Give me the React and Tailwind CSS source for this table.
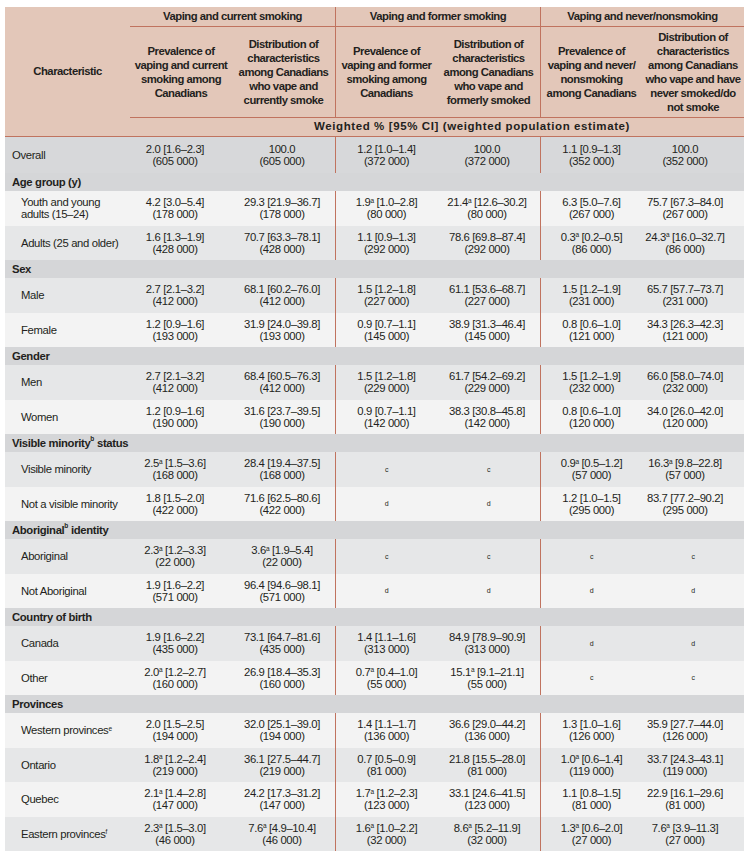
import React from 'react';

const L = 'bg-[#f3f3f3]';
const M = 'bg-[#e6e7e8]';

const rows = [
    { type: 'overall', label: 'Overall', cells: ['2.0 [1.6–2.3]|605 000', '100.0|605 000', '1.2 [1.0–1.4]|372 000', '100.0|372 000', '1.1 [0.9–1.3]|352 000', '100.0|352 000'] },
    { type: 'section', label: 'Age group (y)' },
    { label: ['Youth and young', 'adults (15–24)'], bg: L, cells: ['4.2 [3.0–5.4]|178 000', '29.3 [21.9–36.7]|178 000', '1.9^ [1.0–2.8]|80 000', '21.4^ [12.6–30.2]|80 000', '6.3 [5.0–7.6]|267 000', '75.7 [67.3–84.0]|267 000'] },
    { label: ['Adults (25 and older)'], bg: M, cells: ['1.6 [1.3–1.9]|428 000', '70.7 [63.3–78.1]|428 000', '1.1 [0.9–1.3]|292 000', '78.6 [69.8–87.4]|292 000', '0.3^ [0.2–0.5]|86 000', '24.3^ [16.0–32.7]|86 000'] },
    { type: 'section', label: 'Sex' },
    { label: ['Male'], bg: M, cells: ['2.7 [2.1–3.2]|412 000', '68.1 [60.2–76.0]|412 000', '1.5 [1.2–1.8]|227 000', '61.1 [53.6–68.7]|227 000', '1.5 [1.2–1.9]|231 000', '65.7 [57.7–73.7]|231 000'] },
    { label: ['Female'], bg: L, cells: ['1.2 [0.9–1.6]|193 000', '31.9 [24.0–39.8]|193 000', '0.9 [0.7–1.1]|145 000', '38.9 [31.3–46.4]|145 000', '0.8 [0.6–1.0]|121 000', '34.3 [26.3–42.3]|121 000'] },
    { type: 'section', label: 'Gender' },
    { label: ['Men'], bg: M, cells: ['2.7 [2.1–3.2]|412 000', '68.4 [60.5–76.3]|412 000', '1.5 [1.2–1.8]|229 000', '61.7 [54.2–69.2]|229 000', '1.5 [1.2–1.9]|232 000', '66.0 [58.0–74.0]|232 000'] },
    { label: ['Women'], bg: L, cells: ['1.2 [0.9–1.6]|190 000', '31.6 [23.7–39.5]|190 000', '0.9 [0.7–1.1]|142 000', '38.3 [30.8–45.8]|142 000', '0.8 [0.6–1.0]|120 000', '34.0 [26.0–42.0]|120 000'] },
    { type: 'section', label: 'Visible minority', sup: 'b', rest: 'status' },
    { label: ['Visible minority'], bg: M, cells: ['2.5^ [1.5–3.6]|168 000', '28.4 [19.4–37.5]|168 000', 'c', 'c', '0.9^ [0.5–1.2]|57 000', '16.3^ [9.8–22.8]|57 000'] },
    { label: ['Not a visible minority'], bg: L, cells: ['1.8 [1.5–2.0]|422 000', '71.6 [62.5–80.6]|422 000', 'd', 'd', '1.2 [1.0–1.5]|295 000', '83.7 [77.2–90.2]|295 000'] },
    { type: 'section', label: 'Aboriginal', sup: 'b', rest: 'identity' },
    { label: ['Aboriginal'], bg: M, cells: ['2.3^ [1.2–3.3]|22 000', '3.6^ [1.9–5.4]|22 000', 'c', 'c', 'c', 'c'] },
    { label: ['Not Aboriginal'], bg: L, cells: ['1.9 [1.6–2.2]|571 000', '96.4 [94.6–98.1]|571 000', 'd', 'd', 'd', 'd'] },
    { type: 'section', label: 'Country of birth' },
    { label: ['Canada'], bg: M, cells: ['1.9 [1.6–2.2]|435 000', '73.1 [64.7–81.6]|435 000', '1.4 [1.1–1.6]|313 000', '84.9 [78.9–90.9]|313 000', 'd', 'd'] },
    { label: ['Other'], bg: L, cells: ['2.0^ [1.2–2.7]|160 000', '26.9 [18.4–35.3]|160 000', '0.7^ [0.4–1.0]|55 000', '15.1^ [9.1–21.1]|55 000', 'c', 'c'] },
    { type: 'section', label: 'Provinces' },
    { label: ['Western provinces'], sup: 'e', bg: L, cells: ['2.0 [1.5–2.5]|194 000', '32.0 [25.1–39.0]|194 000', '1.4 [1.1–1.7]|136 000', '36.6 [29.0–44.2]|136 000', '1.3 [1.0–1.6]|126 000', '35.9 [27.7–44.0]|126 000'] },
    { label: ['Ontario'], bg: M, cells: ['1.8^ [1.2–2.4]|219 000', '36.1 [27.5–44.7]|219 000', '0.7 [0.5–0.9]|81 000', '21.8 [15.5–28.0]|81 000', '1.0^ [0.6–1.4]|119 000', '33.7 [24.3–43.1]|119 000'] },
    { label: ['Quebec'], bg: L, cells: ['2.1^ [1.4–2.8]|147 000', '24.2 [17.3–31.2]|147 000', '1.7^ [1.2–2.3]|123 000', '33.1 [24.6–41.5]|123 000', '1.1 [0.8–1.5]|81 000', '22.9 [16.1–29.6]|81 000'] },
    { label: ['Eastern provinces'], sup: 'f', bg: M, cells: ['2.3^ [1.5–3.0]|46 000', '7.6^ [4.9–10.4]|46 000', '1.6^ [1.0–2.2]|32 000', '8.6^ [5.2–11.9]|32 000', '1.3^ [0.6–2.0]|27 000', '7.6^ [3.9–11.3]|27 000'] },
];

// widths + group dividers for the six value columns
const colCls = [
    'w-[102px]',
    'w-[103px]',
    'w-[102px] border-l border-[#c0735f]',
    'w-[103px]',
    'w-[102px] border-l border-[#c0735f]',
    'w-[102px]',
];
const colPad = ['pr-[12px]', 'pr-[3px]', '', 'pr-[3px]', '', 'pr-[16px]'];

const subHeads = [
    ['Prevalence of', 'vaping and current', 'smoking among', 'Canadians'],
    ['Distribution of', 'characteristics', 'among Canadians', 'who vape and', 'currently smoke'],
    ['Prevalence of', 'vaping and former', 'smoking among', 'Canadians'],
    ['Distribution of', 'characteristics', 'among Canadians', 'who vape and', 'formerly smoked'],
    ['Prevalence of', 'vaping and never/', 'nonsmoking', 'among Canadians'],
    ['Distribution of', 'characteristics', 'among Canadians', 'who vape and have', 'never smoked/do', 'not smoke'],
];

function Sup({ children }) {
    return <span className="relative -top-[3.5px] text-[6.5px] leading-none">{children}</span>;
}

function Value({ text, pad }) {
    if (text === 'c' || text === 'd') {
        return <span className="text-[7px] leading-none">{text}</span>;
    }
    const [top, n] = text.split('|');
    const [num, ...ci] = top.split(' ');
    const flagged = num.endsWith('^');
    return (
        <div className={`w-full text-center leading-[12px] ${pad}`}>
            <div className="whitespace-nowrap">
                {flagged ? num.slice(0, -1) : num}
                {flagged && <Sup>a</Sup>}
                {ci.length > 0 && ' ' + ci.join(' ')}
            </div>
            <div className="whitespace-nowrap">({n})</div>
        </div>
    );
}

function Cells({ cells }) {
    return cells.map((c, i) => (
        <div key={i} className={`${colCls[i]} h-full flex items-center justify-center`}>
            <Value text={c} pad={colPad[i]} />
        </div>
    ));
}

export default function App() {
    return (
        <div className="w-[750px] h-[854px] bg-white pt-[7px] pl-[5px] text-[11.3px] tracking-[-0.35px] text-[#231f20] font-['Liberation_Sans',Arial,sans-serif]">
            <div className="w-[739px]">

                {/* Header */}
                <div className="flex bg-[#e3c7b9] border-b border-[#c0735f] font-bold tracking-[-0.5px]">
                    <div className="w-[125px] flex items-center justify-center">Characteristic</div>
                    <div className="w-[614px]">
                        <div className="flex h-[20px] border-b border-[#c0735f]">
                            <div className="w-[205px] flex items-center justify-center">Vaping and current smoking</div>
                            <div className="w-[205px] flex items-center justify-center border-l border-[#c0735f]">Vaping and former smoking</div>
                            <div className="w-[204px] flex items-center justify-center border-l border-[#c0735f]">Vaping and never/nonsmoking</div>
                        </div>
                        <div className="flex h-[91px] border-b border-[#c0735f]">
                            {subHeads.map((lines, i) => (
                                <div key={i} className={`${colCls[i]} flex items-center justify-center text-center leading-[14px]`}>
                                    <div>
                                        {lines.map((l, j) => <div key={j} className="whitespace-nowrap">{l}</div>)}
                                    </div>
                                </div>
                            ))}
                        </div>
                        <div className="h-[18px] flex items-center justify-center pl-[70px] text-[11.5px] tracking-[0.6px]">
                            Weighted % [95% CI] (weighted population estimate)
                        </div>
                    </div>
                </div>

                {/* Body */}
                {rows.map((r, i) => {
                    if (r.type === 'section') {
                        return (
                            <div key={i} className="h-[18px] bg-[#d5d6d8] flex items-center pl-[7px] font-bold">
                                {r.label}{r.sup && <Sup>{r.sup}</Sup>}
                                {r.rest && <span className="ml-[3px]">{r.rest}</span>}
                            </div>
                        );
                    }
                    if (r.type === 'overall') {
                        return (
                            <div key={i} className="h-[36px] bg-[#d7d8da] flex">
                                <div className="w-[125px] flex items-center pl-[7px]">{r.label}</div>
                                <Cells cells={r.cells} />
                            </div>
                        );
                    }
                    return (
                        <div key={i} className={`h-[34.5px] ${r.bg} flex`}>
                            <div className="w-[125px] flex items-center pl-[16px] leading-[12px]">
                                <div>
                                    {r.label.map((l, j) => (
                                        <div key={j} className="whitespace-nowrap">
                                            {l}{r.sup && j === r.label.length - 1 && <Sup>{r.sup}</Sup>}
                                        </div>
                                    ))}
                                </div>
                            </div>
                            <Cells cells={r.cells} />
                        </div>
                    );
                })}
            </div>
        </div>
    );
}
